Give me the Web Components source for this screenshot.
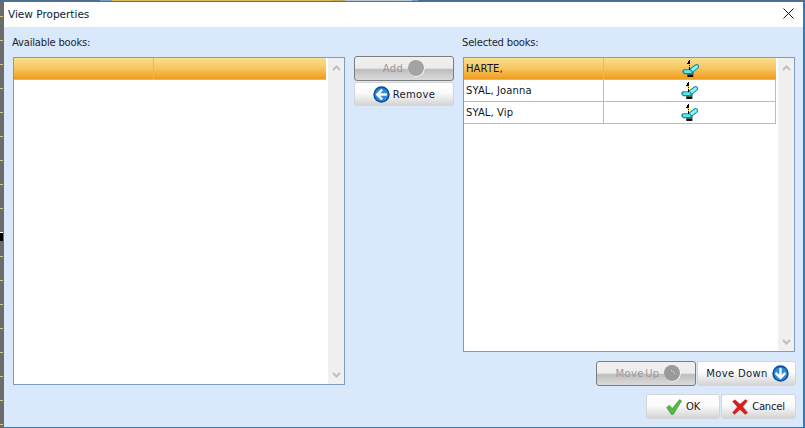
<!DOCTYPE html>
<html>
<head>
<meta charset="utf-8">
<title>View Properties</title>
<style>
html, body { margin: 0; height: 100%; background: #6b6b6b; }
body { font-family: "DejaVu Sans", sans-serif; font-size: 10px; color: #1c2530; overflow: hidden; }
</style>
</head>
<body>
<view-properties></view-properties>

<script>
const ICONS = {
    pin: `<svg width="17" height="17" viewBox="0 0 17 17">
        <rect x="5" y="12" width="6.5" height="5" fill="#555"/><rect x="6" y="15" width="5" height="2" fill="#111"/>
        <path d="M9.5 10.5 14.6 6.6" fill="none" stroke="#0f8d9c" stroke-width="5" stroke-linecap="round"/>
        <path d="M9.5 10.5 14.6 6.6" fill="none" stroke="#8ff6f6" stroke-width="3" stroke-linecap="round"/>
        <path d="M0 11.5 1.5 9.2h7.5l2.5 3.4-2 1.6H2z" fill="#0f8d9c"/>
        <path d="M1.6 11.2 2.6 10.2h6l1.2 2.2-.8.6H2.6z" fill="#5fe6ea"/>
        <g shape-rendering="crispEdges">
            <rect x="7" y="0" width="1" height="10" fill="#000"/><rect x="6" y="1" width="1" height="3" fill="#000"/><rect x="5" y="3" width="1" height="1" fill="#000"/>
            <rect x="6" y="4" width="2" height="1" fill="#f2e01c"/><rect x="7" y="6" width="1" height="1" fill="#f2e01c"/>
        </g>
    </svg>`,
    left: `<svg width="17" height="17" viewBox="0 0 16 16"><circle cx="8" cy="8" r="7.7" fill="#0b4f9c"/><circle cx="8" cy="8" r="6.2" fill="#2a8ae2"/><path d="M8.6 3.4 4 8l4.6 4.6M4.6 8H13" fill="none" stroke="#fff" stroke-width="2.3"/></svg>`,
    down: `<svg width="17" height="17" viewBox="0 0 16 16"><circle cx="8" cy="8" r="7.7" fill="#0b4f9c"/><circle cx="8" cy="8" r="6.2" fill="#2a8ae2"/><path d="M3.4 7.4 8 12l4.6-4.6M8 12V3" fill="none" stroke="#fff" stroke-width="2.3"/></svg>`,
    off: `<svg width="17" height="17" viewBox="0 0 17 17"><circle cx="8.5" cy="8.5" r="8.2" fill="#fff"/><circle cx="8" cy="8" r="8" fill="#a3a3a3"/></svg>`,
    offup: `<svg width="17" height="17" viewBox="0 0 17 17"><circle cx="8.5" cy="8.5" r="8.2" fill="#fff"/><circle cx="8" cy="8" r="8" fill="#9a9a9a"/><path d="M7 5l1 1M9 6l1 1M10 8l1 1" stroke="#e4e4e4" stroke-width="1"/></svg>`,
    ok: `<svg width="16" height="16" viewBox="0 0 16 16"><path d="M.6 8.6 3.4 6.2l2.8 3.4L13.6.6l2 1.4L7.2 15.4H5.4z" fill="#56b947" stroke="#348f2d" stroke-width=".6"/></svg>`,
    cancel: `<svg width="16" height="16" viewBox="0 0 16 16"><path d="M.6 2.4 3 .8l5 4.4L13.4.6l2 1.4-4.6 5.8 4.8 6-2.4 1.6-5.2-5L2.4 15.4.6 13.4 5.4 8z" fill="#dc1f1f" stroke="#a81414" stroke-width=".4"/></svg>`
}

class UiButton extends HTMLElement {
    constructor() {
        super()
        this.attachShadow({ mode: 'open' })
        const icon = ICONS[this.getAttribute('icon')] || ''
        const text = `<span><slot></slot></span>`
        const first = this.hasAttribute('icon-first')
        this.shadowRoot.innerHTML = `
            <style>
                :host {
                    display: flex;
                    align-items: center;
                    justify-content: center;
                    gap: var(--btn-gap, 4px);
                    box-sizing: border-box;
                    height: 25px;
                    border: 1px solid #d3d5d8;
                    border-radius: 3px;
                    background: linear-gradient(#fff 0, #fbfbfb 45%, #d4d4d4 100%);
                    font-size: 10px;
                    letter-spacing: var(--btn-spacing, .35px);
                    word-spacing: var(--btn-word, 0);
                    color: #15202c;
                }
                :host([disabled]) {
                    border-color: #7d7d7d;
                    background: linear-gradient(#f0f0f0 0, #ececec 48%, #bdbdbd 55%, #cfcfcf 80%, #dadada 100%);
                    color: #9a9a9a;
                }
                svg { display: block; flex: none; }
            </style>
            ${first ? icon + text : text + icon}
        `
    }
}

class BookScrollbar extends HTMLElement {
    constructor() {
        super()
        this.attachShadow({ mode: 'open' })
        this.shadowRoot.innerHTML = `
            <style>
                :host {
                    display: flex;
                    flex-direction: column;
                    justify-content: space-between;
                    align-items: center;
                    flex: none;
                    width: 16px;
                    background: #f0f0f0;
                    padding: 7px 0 6px;
                    box-sizing: border-box;
                }
                svg { display: block; }
            </style>
            <svg width="9" height="6" viewBox="0 0 9 6"><path d="M1 5l3.5-3.5L8 5" fill="none" stroke="#bfbfbf" stroke-width="2"/></svg>
            <svg width="9" height="6" viewBox="0 0 9 6"><path d="M1 1l3.5 3.5L8 1" fill="none" stroke="#bfbfbf" stroke-width="2"/></svg>
        `
    }
}

class BookRow extends HTMLElement {
    constructor() {
        super()
        this.attachShadow({ mode: 'open' })
        this.shadowRoot.innerHTML = `
            <style>
                :host {
                    display: grid;
                    grid-template-columns: 140px 1fr;
                    box-sizing: border-box;
                    height: 22px;
                    border-bottom: 1px solid #bcbcbc;
                    background: #fff;
                    font-size: 10px;
                    letter-spacing: .1px;
                    color: #10161d;
                }
                :host([selected]) {
                    background: linear-gradient(#fbe08f 0, #f6c560 50%, #ef9c1c 100%);
                }
                .name {
                    display: flex;
                    align-items: center;
                    padding-left: 2px;
                    border-right: 1px solid #bcbcbc;
                }
                .icon { display: flex; align-items: center; justify-content: center; border-right: 1px solid #bcbcbc; }
                :host([selected]) .icon { border-right: 0; }
                svg { display: block; }
            </style>
            <div class="name"><slot></slot></div>
            <div class="icon">${this.hasAttribute('pinned') ? ICONS.pin : ''}</div>
        `
    }
}

class BookList extends HTMLElement {
    constructor() {
        super()
        this.attachShadow({ mode: 'open' })
        this.shadowRoot.innerHTML = `
            <style>
                :host {
                    display: flex;
                    box-sizing: border-box;
                    width: 332px;
                    border: 1px solid #7b9ebf;
                    background: #fff;
                }
                .rows { flex: 1; min-width: 0; }
                book-scrollbar { margin-left: 2px; }
            </style>
            <div class="rows"><slot></slot></div>
            <book-scrollbar></book-scrollbar>
        `
    }
}

class ViewProperties extends HTMLElement {
    constructor() {
        super()
        this.attachShadow({ mode: 'open' })
        this.shadowRoot.innerHTML = `
            <style>
                :host {
                    display: block;
                    height: 428px;
                    box-sizing: border-box;
                    padding: 1px 0 0 3px;
                    background:
                        linear-gradient(90deg, #4d6e90 0 100px, #6f9fd0 100px 112px, #e0b860 112px 331px, #c9a460 331px 345px, #b7c7da 345px 412px, #6f9fd0 412px 418px, #4d6e90 418px) 0 0 / 100% 1px no-repeat,
                        linear-gradient(#fff, #fff) 0 232px / 3px 1px no-repeat,
                        linear-gradient(#000, #000) 0 233px / 3px 8px no-repeat,
                        repeating-linear-gradient(#6b6b6b 0 16px, #d8c58a 16px 17px, #6b6b6b 17px 24px);
                }
                .window {
                    height: 100%;
                    box-sizing: border-box;
                    display: flex;
                    flex-direction: column;
                    border: 1px solid #2c7cc4;
                    border-right-width: 2px;
                    background: #d9e9fb;
                }
                .title {
                    display: flex;
                    align-items: center;
                    justify-content: space-between;
                    flex: none;
                    height: 25px;
                    box-sizing: border-box;
                    padding: 0 9px 2px 4px;
                    background: #fff;
                    font-size: 10.5px;
                    color: #0c1a33;
                }
                .close { display: block; }
                .body {
                    flex: 1;
                    display: grid;
                    grid-template-columns: 332px 100px 333px;
                    column-gap: 9px;
                    padding: 0 0 0 9px;
                }
                .col { display: flex; flex-direction: column; min-height: 0; }
                .label { height: 30px; flex: none; display: flex; align-items: center; padding: 1px 0 0 0; margin-left: -1px; box-sizing: border-box; letter-spacing: -.2px; }
                #left { height: 328px; }
                #right { height: 295px; }
                .mid { padding-top: 29px; gap: 1px; --btn-gap: 5px; }
                .mid ui-button + ui-button { height: 24px; --btn-gap: 3px; }
                .pair { display: flex; justify-content: flex-end; margin-top: 9px; gap: 1px; }
                .pair.move ui-button { width: 100px; --btn-word: -2px; padding-left: 4px; }
                .pair.move ui-button + ui-button { width: 99px; --btn-word: 0; padding-left: 2px; }
                .pair.done { margin-top: 8px; --btn-spacing: -.2px; }
                .pair.done ui-button { width: 74px; }
                .pair.done ui-button + ui-button { width: 75px; }
            </style>
            <div class="window">
                <div class="title">
                    <span>View Properties</span>
                    <svg class="close" width="11" height="11" viewBox="0 0 11 11"><path d="M.5.5l10 10M10.5.5l-10 10" stroke="#111" stroke-width="1"/></svg>
                </div>
                <div class="body">
                    <div class="col">
                        <div class="label">Available books:</div>
                        <book-list id="left">
                            <book-row selected></book-row>
                        </book-list>
                    </div>
                    <div class="col mid">
                        <ui-button icon="off" disabled>Add</ui-button>
                        <ui-button icon="left" icon-first>Remove</ui-button>
                    </div>
                    <div class="col">
                        <div class="label">Selected books:</div>
                        <book-list id="right">
                            <book-row selected pinned>HARTE,</book-row>
                            <book-row pinned>SYAL, Joanna</book-row>
                            <book-row pinned>SYAL, Vip</book-row>
                        </book-list>
                        <div class="pair move">
                            <ui-button icon="offup" disabled>Move Up</ui-button>
                            <ui-button icon="down">Move Down</ui-button>
                        </div>
                        <div class="pair done">
                            <ui-button icon="ok" icon-first>OK</ui-button>
                            <ui-button icon="cancel" icon-first>Cancel</ui-button>
                        </div>
                    </div>
                </div>
            </div>
        `
    }
}

customElements.define('ui-button', UiButton)
customElements.define('book-scrollbar', BookScrollbar)
customElements.define('book-row', BookRow)
customElements.define('book-list', BookList)
customElements.define('view-properties', ViewProperties)
</script>
</body>
</html>
